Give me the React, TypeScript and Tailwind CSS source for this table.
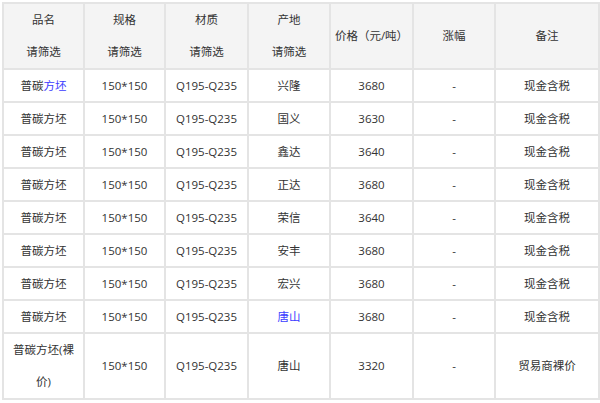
const rows = [
  { name: "普碳方坯", spec: "150*150", mat: "Q195-Q235", place: "兴隆", price: "3680", note: "现金含税", blueName: true },
  { name: "普碳方坯", spec: "150*150", mat: "Q195-Q235", place: "国义", price: "3630", note: "现金含税" },
  { name: "普碳方坯", spec: "150*150", mat: "Q195-Q235", place: "鑫达", price: "3640", note: "现金含税" },
  { name: "普碳方坯", spec: "150*150", mat: "Q195-Q235", place: "正达", price: "3680", note: "现金含税" },
  { name: "普碳方坯", spec: "150*150", mat: "Q195-Q235", place: "荣信", price: "3640", note: "现金含税" },
  { name: "普碳方坯", spec: "150*150", mat: "Q195-Q235", place: "安丰", price: "3680", note: "现金含税" },
  { name: "普碳方坯", spec: "150*150", mat: "Q195-Q235", place: "宏兴", price: "3680", note: "现金含税" },
  { name: "普碳方坯", spec: "150*150", mat: "Q195-Q235", place: "唐山", price: "3680", note: "现金含税", bluePlace: true },
]

const cell = "border-2 border-[#e4e4e4] text-center align-middle p-0"

export default function App() {
  return (
    <div className="w-[600px] h-[403px] bg-white overflow-hidden pt-[2px] pl-[2px] font-['Open_Sans','Noto_Sans_CJK_SC',sans-serif] text-[11.5px] text-[#333]">
      <table className="table-fixed border-collapse w-[596px]">
        <colgroup>
          <col className="w-[81px]" />
          <col className="w-[81px]" />
          <col className="w-[83px]" />
          <col className="w-[82px]" />
          <col className="w-[83px]" />
          <col className="w-[82px]" />
          <col className="w-[104px]" />
        </colgroup>
        <thead>
          <tr className="bg-[#f4f4f4] h-[65px]">
            <th className={cell + " font-normal leading-[32px]"}>品名<br />请筛选</th>
            <th className={cell + " font-normal leading-[32px]"}>规格<br />请筛选</th>
            <th className={cell + " font-normal leading-[32px]"}>材质<br />请筛选</th>
            <th className={cell + " font-normal leading-[32px]"}>产地<br />请筛选</th>
            <th className={cell + " font-normal"}>价格（元/吨）</th>
            <th className={cell + " font-normal"}>涨幅</th>
            <th className={cell + " font-normal"}>备注</th>
          </tr>
        </thead>
        <tbody>
          {rows.map((r, i) => (
            <tr key={i} className="h-[33px]">
              <td className={cell}>
                {r.blueName ? (
                  <>普碳<span className="text-[#3c3cff]">方坯</span></>
                ) : (
                  r.name
                )}
              </td>
              <td className={cell}>{r.spec}</td>
              <td className={cell}>{r.mat}</td>
              <td className={cell + (r.bluePlace ? " text-[#3c3cff]" : "")}>{r.place}</td>
              <td className={cell}>{r.price}</td>
              <td className={cell}>-</td>
              <td className={cell}>{r.note}</td>
            </tr>
          ))}
          <tr className="h-[65px]">
            <td className={cell + " leading-[32px]"}>普碳方坯(裸<br />价)</td>
            <td className={cell}>150*150</td>
            <td className={cell}>Q195-Q235</td>
            <td className={cell}>唐山</td>
            <td className={cell}>3320</td>
            <td className={cell}>-</td>
            <td className={cell}>贸易商裸价</td>
          </tr>
        </tbody>
      </table>
    </div>
  )
}
